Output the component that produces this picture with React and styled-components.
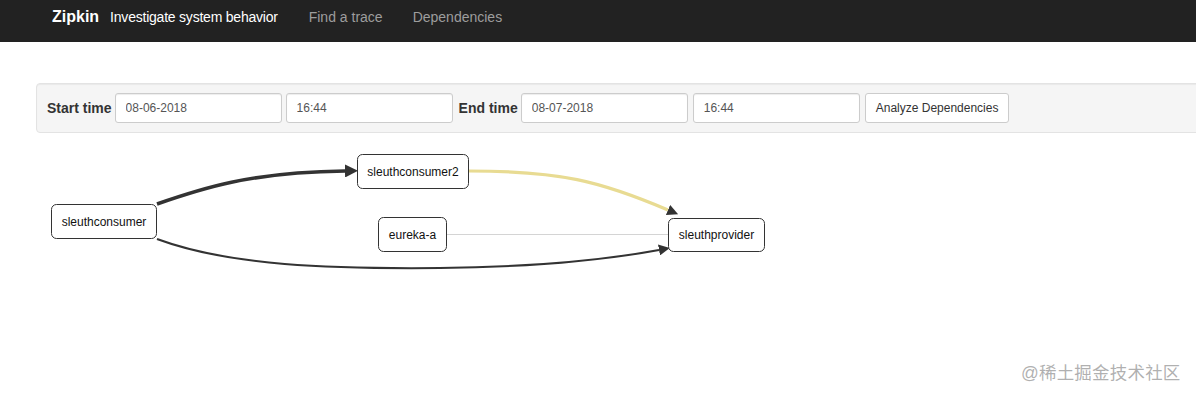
import React from "react";
import styled, { createGlobalStyle } from "styled-components";

const GlobalStyle = createGlobalStyle`
  html, body {
    margin: 0;
    padding: 0;
    background: #fff;
    overflow: hidden;
    font-family: "Liberation Sans", Arial, sans-serif;
    font-size: 14px;
    color: #333;
  }
`;

const Navbar = styled.nav`
  height: 42px;
  background: #222;
  display: flex;
  align-items: baseline;
  padding: 7px 0 0 52px;
  box-sizing: border-box;
`;

const Brand = styled.a`
  font-size: 16px;
  font-weight: bold;
  color: #fff;
  line-height: 20px;
  margin-right: 11px;
`;

const Tagline = styled.span`
  font-size: 14px;
  color: #fff;
  line-height: 20px;
  letter-spacing: -0.22px;
  margin-right: 16px;
`;

const NavLink = styled.a`
  font-size: 14px;
  color: #9d9d9d;
  line-height: 20px;
  padding: 0 15px;
`;

const Content = styled.div`
  padding: 41px 0 0 36px;
`;

const Well = styled.div`
  width: 1200px;
  box-sizing: border-box;
  background: #f5f5f5;
  border: 1px solid #e3e3e3;
  border-radius: 4px;
  box-shadow: inset 0 1px 1px rgba(0, 0, 0, 0.05);
  padding: 9px 10px;
  display: flex;
  align-items: center;
`;

const Label = styled.label`
  font-size: 14px;
  font-weight: bold;
  color: #333;
  margin: 0 3px 0 ${(p) => p.$offset ?? 0}px;
`;

const Input = styled.input`
  width: 167px;
  height: 30px;
  box-sizing: border-box;
  padding: 5px 10px;
  font-family: "Liberation Sans", Arial, sans-serif;
  font-size: 12px;
  color: #555;
  background: #fff;
  border: 1px solid #ccc;
  border-radius: 3px;
  box-shadow: inset 0 1px 1px rgba(0, 0, 0, 0.075);
  margin-right: ${(p) => p.$gap ?? 4}px;
  outline: none;
`;

const Button = styled.button`
  height: 30px;
  box-sizing: border-box;
  padding: 5px 10px;
  font-family: "Liberation Sans", Arial, sans-serif;
  font-size: 12px;
  color: #333;
  background: #fff;
  border: 1px solid #ccc;
  border-radius: 3px;
`;

const Graph = styled.svg`
  display: block;
  margin-left: -36px;
  font-family: "Liberation Sans", Arial, sans-serif;
`;

const Watermark = styled.div`
  position: absolute;
  left: 1021px;
  top: 359px;
  font-family: "Liberation Sans", "Noto Sans CJK SC", sans-serif;
  font-size: 17.5px;
  color: rgba(150, 150, 150, 0.75);
  letter-spacing: 0.2px;
`;

// graph drawn in page coordinates, shifted up by the top of the svg
const TOP = 132;

const nodes = [
  { id: "sleuthconsumer", x: 51, y: 203, w: 106, h: 35 },
  { id: "sleuthconsumer2", x: 357, y: 153, w: 112, h: 35 },
  { id: "eureka-a", x: 378, y: 216, w: 69, h: 35 },
  { id: "sleuthprovider", x: 668, y: 217, w: 97, h: 34 },
];

const edges = [
  { d: "M447,233.5 L668,233.5", stroke: "#d4d4d4", width: 1 },
  {
    d: "M157,203 C200,188 250,171 345,170",
    stroke: "#333",
    width: 3.5,
    arrow: "big",
  },
  {
    d: "M157,238 C230,265 330,268 440,267 C540,266 610,258 659,249",
    stroke: "#333",
    width: 2,
    arrow: "small",
  },
  {
    d: "M469,170 C560,170 600,180 668,209",
    stroke: "#e8db92",
    width: 3.2,
    arrow: "small",
  },
];

const App = () => (
  <>
    <GlobalStyle />
    <Navbar>
      <Brand>Zipkin</Brand>
      <Tagline>Investigate system behavior</Tagline>
      <NavLink>Find a trace</NavLink>
      <NavLink>Dependencies</NavLink>
    </Navbar>
    <Content>
      <Well>
        <Label>Start time</Label>
        <Input defaultValue="08-06-2018" />
        <Input defaultValue="16:44" $gap={0} />
        <Label $offset={6}>End time</Label>
        <Input defaultValue="08-07-2018" $gap={5} />
        <Input defaultValue="16:44" $gap={5} />
        <Button>Analyze Dependencies</Button>
      </Well>
      <Graph width="1196" height="262" viewBox={`0 ${TOP} 1196 262`}>
        <defs>
          <marker
            id="big"
            markerUnits="userSpaceOnUse"
            markerWidth="13"
            markerHeight="13"
            refX="0"
            refY="6.5"
            orient="auto"
          >
            <path d="M0,0 L13,6.5 L0,13 z" fill="#333" />
          </marker>
          <marker
            id="small"
            markerUnits="userSpaceOnUse"
            markerWidth="11"
            markerHeight="11"
            refX="0"
            refY="5.5"
            orient="auto"
          >
            <path d="M0,0 L11,5.5 L0,11 z" fill="#333" />
          </marker>
        </defs>
        {edges.map((e, i) => (
          <path
            key={i}
            d={e.d}
            fill="none"
            stroke={e.stroke}
            strokeWidth={e.width}
            markerEnd={e.arrow ? `url(#${e.arrow})` : undefined}
          />
        ))}
        {nodes.map((n) => (
          <g key={n.id}>
            <rect
              x={n.x + 0.5}
              y={n.y + 0.5}
              width={n.w - 1}
              height={n.h - 1}
              rx="5"
              ry="5"
              fill="#fff"
              stroke="#333"
              strokeWidth="1"
            />
            <text
              x={n.x + n.w / 2}
              y={n.y + n.h / 2 + 4}
              textAnchor="middle"
              fontSize="12"
              fill="#111"
            >
              {n.id}
            </text>
          </g>
        ))}
      </Graph>
    </Content>
    <Watermark>@稀土掘金技术社区</Watermark>
  </>
);

export default App;
